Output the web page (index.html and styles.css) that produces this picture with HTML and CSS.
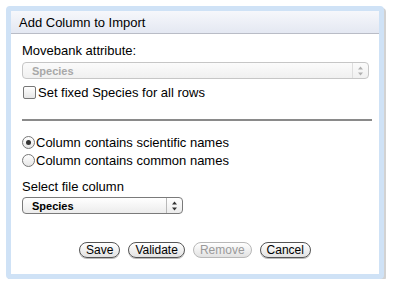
FILE: index.html
```html
<!DOCTYPE html>
<html>
<head>
<meta charset="utf-8">
<link rel="stylesheet" href="styles.css">
</head>
<body>
<div class="dialog">
  <div class="title">Add Column to Import</div>
  <div class="content">
    <div class="label">Movebank attribute:</div>
    <div class="select wide disabled">
      <span class="sel-text">Species</span>
      <span class="arrows"><svg width="7" height="10" viewBox="0 0 7 10"><path d="M3.5 0.5 L6 3.5 L1 3.5 Z" fill="currentColor"/><path d="M3.5 9.5 L6 6.5 L1 6.5 Z" fill="currentColor"/></svg></span>
    </div>
    <label class="check-row"><span class="checkbox"></span>Set fixed Species for all rows</label>
    <div class="rule"></div>
    <label class="radio-row"><span class="radio checked"></span>Column contains scientific names</label>
    <label class="radio-row second"><span class="radio"></span>Column contains common names</label>
    <div class="label file-label">Select file column</div>
    <div class="select narrow">
      <span class="sel-text">Species</span>
      <span class="arrows sep"><svg width="7" height="10" viewBox="0 0 7 10"><path d="M3.5 0.5 L6 3.5 L1 3.5 Z" fill="currentColor"/><path d="M3.5 9.5 L6 6.5 L1 6.5 Z" fill="currentColor"/></svg></span>
    </div>
    <div class="buttons">
      <span class="btn b-save">Save</span>
      <span class="btn b-validate">Validate</span>
      <span class="btn b-remove disabled">Remove</span>
      <span class="btn b-cancel">Cancel</span>
    </div>
  </div>
</div>
</body>
</html>
```
FILE: styles.css
```css
html, body {
  margin: 0;
  padding: 0;
  background: #ffffff;
}
body {
  font-family: "Liberation Sans", Arial, sans-serif;
  color: #000;
  padding: 6px 0 0 6px;
}
.dialog {
  width: 368px;
  height: 263px;
  border: 5px solid #cfe2f6;
  border-radius: 4px;
  background: #fff;
  box-shadow: 2px 2px 0 #d2d2d2;
  display: flex;
  flex-direction: column;
}
.title {
  height: 22px;
  line-height: 23px;
  padding-left: 8px;
  font-size: 13px;
  background: linear-gradient(#f6f7fb, #e4e8f2);
  border-bottom: 1px solid #b9bcc6;
}
.content {
  padding: 9px 0 0 11px;
  display: flex;
  flex-direction: column;
  flex: 1;
}
.label {
  font-size: 13px;
  line-height: 15px;
}
.select {
  margin-top: 4px;
  height: 15px;
  border: 1px solid #8c8c8c;
  border-radius: 4px;
  background: linear-gradient(#ffffff, #ececec);
  display: flex;
  align-items: center;
  justify-content: space-between;
  font-size: 11px;
  font-weight: bold;
  box-sizing: content-box;
}
.select.wide {
  width: 345px;
  border-color: #c6c6c6;
  color: #a8a8a8;
  background: linear-gradient(#fbfbfb, #f0f0f0);
}
.select.narrow {
  width: 159px;
  border-color: #7a7a7a;
  margin-top: 3px;
}
.sel-text {
  padding-left: 9px;
}
.arrows {
  width: 15px;
  height: 15px;
  display: flex;
  align-items: center;
  justify-content: center;
  color: #333;
}
.wide .arrows {
  color: #b0b0b0;
  border-left: 1px solid #dedede;
}
.arrows.sep {
  border-left: 1px solid #b8b8b8;
}
.check-row, .radio-row {
  display: flex;
  align-items: center;
  font-size: 13px;
  line-height: 15px;
}
.check-row {
  margin-top: 6px;
}
.checkbox {
  width: 11px;
  height: 11px;
  border: 1px solid #777;
  border-radius: 2px;
  background: linear-gradient(#fff, #e6e6e6);
  margin: 0 2px 0 1px;
}
.rule {
  margin-top: 19px;
  width: 350px;
  height: 2px;
  background: #8a8a8a;
}
.radio-row {
  margin-top: 14px;
}
.radio-row.second {
  margin-top: 3px;
}
.radio {
  width: 11px;
  height: 11px;
  border: 1px solid #777;
  border-radius: 50%;
  background: linear-gradient(#fff, #e6e6e6);
  margin: 0 1px 0 0;
  display: flex;
  align-items: center;
  justify-content: center;
}
.radio.checked::after {
  content: "";
  width: 5px;
  height: 5px;
  border-radius: 50%;
  background: #333;
}
.file-label {
  margin-top: 11px;
}
.buttons {
  margin-top: 28px;
  display: flex;
  justify-content: center;
  gap: 8px;
  padding-right: 11px;
}
.btn {
  height: 14px;
  line-height: 14px;
  padding: 0 6px;
  border: 1px solid #555;
  border-radius: 8px;
  background: linear-gradient(#ffffff, #e2e2e2);
  font-size: 12px;
  box-shadow: 0 1px 0 #bbb;
}
.btn.disabled {
  color: #9a9a9a;
  border-color: #b8b8b8;
  box-shadow: none;
}
```
